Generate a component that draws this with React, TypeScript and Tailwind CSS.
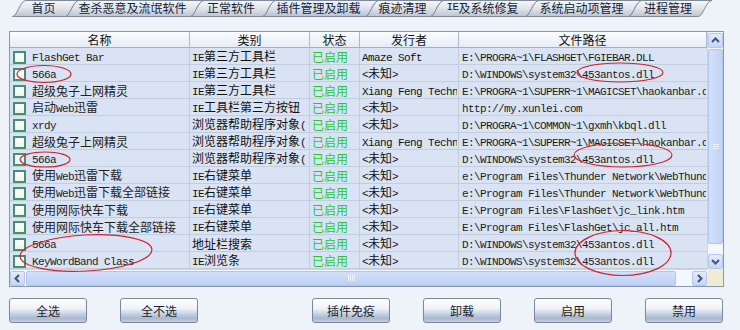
import React from "react";

const tabs = [
  { label: "首页", x: 12 },
  { label: "查杀恶意及流氓软件", x: 65 },
  { label: "正常软件", x: 190 },
  { label: "插件管理及卸载", x: 262, active: true },
  { label: "痕迹清理", x: 365 },
  { label: "IE及系统修复", x: 430 },
  { label: "系统启动项管理", x: 525 },
  { label: "进程管理", x: 628 },
];
const tabEnd = 698;

const rows = [
  ["FlashGet Bar", "IE第三方工具栏", "Amaze Soft", "E:\\PROGRA~1\\FLASHGET\\FGIEBAR.DLL"],
  ["566a", "IE第三方工具栏", "<未知>", "D:\\WINDOWS\\system32\\453antos.dll"],
  ["超级兔子上网精灵", "IE第三方工具栏", "Xiang Feng Technology", "E:\\PROGRA~1\\SUPERR~1\\MAGICSET\\haokanbar.dll"],
  ["启动Web迅雷", "IE工具栏第三方按钮", "<未知>", "http://my.xunlei.com"],
  ["xrdy", "浏览器帮助程序对象(BHO)", "<未知>", "D:\\PROGRA~1\\COMMON~1\\gxmh\\kbql.dll"],
  ["超级兔子上网精灵", "浏览器帮助程序对象(BHO)", "Xiang Feng Technology", "E:\\PROGRA~1\\SUPERR~1\\MAGICSET\\haokanbar.dll"],
  ["566a", "浏览器帮助程序对象(BHO)", "<未知>", "D:\\WINDOWS\\system32\\453antos.dll"],
  ["使用Web迅雷下载", "IE右键菜单", "<未知>", "e:\\Program Files\\Thunder Network\\WebThunder\\Program\\geturl.htm"],
  ["使用Web迅雷下载全部链接", "IE右键菜单", "<未知>", "e:\\Program Files\\Thunder Network\\WebThunder\\Program\\getAllurl.htm"],
  ["使用网际快车下载", "IE右键菜单", "<未知>", "E:\\Program Files\\FlashGet\\jc_link.htm"],
  ["使用网际快车下载全部链接", "IE右键菜单", "<未知>", "E:\\Program Files\\FlashGet\\jc_all.htm"],
  ["566a", "地址栏搜索", "<未知>", "D:\\WINDOWS\\system32\\453antos.dll"],
  ["KeyWordBand Class", "IE浏览条", "<未知>", "D:\\WINDOWS\\system32\\453antos.dll"],
];

const buttons = ["全选", "全不选", "插件免疫", "卸载", "启用", "禁用"];

// ascii runs get a narrow mono face so they sit at half the CJK width, like SimSun
const Txt = ({ s }: { s: string }) => (
  <>
    {s
      .split(/([\x20-\x7e]+)/)
      .filter(Boolean)
      .map((p, i) =>
        /^[\x20-\x7e]+$/.test(p) ? (
          <span key={i} className="font-['Liberation_Mono',monospace] text-[11px] tracking-[-0.6px]">
            {p}
          </span>
        ) : (
          <span key={i}>{p}</span>
        )
      )}
  </>
);

const TabShape = ({ w, active }: { w: number; active?: boolean }) => (
  <svg className="absolute left-0 top-0" width={w + 16} height={17} viewBox={`0 0 ${w + 16} 17`}>
    <defs>
      <linearGradient id={active ? "tga" : "tg"} x1="0" y1="0" x2="0" y2="1">
        <stop offset="0" stopColor={active ? "#f1f5fb" : "#f6f7f9"} />
        <stop offset="0.5" stopColor={active ? "#dbe3ef" : "#e0e4ea"} />
        <stop offset="1" stopColor={active ? "#b4c1d4" : "#bcc4cf"} />
      </linearGradient>
    </defs>
    <path
      d={`M0.5,16.5 C5,16.5 8,0.5 14,0.5 L${w + 14},0.5 C${w + 8},0.5 ${w + 5},16.5 ${w + 0.5},16.5 Z`}
      fill={`url(#${active ? "tga" : "tg"})`}
      stroke="#7f8a99"
      strokeWidth="1"
    />
  </svg>
);

const Chevron = ({ dir }: { dir: "up" | "down" | "left" | "right" }) => {
  const d = {
    up: "M3,8 L6.5,4.5 L10,8",
    down: "M3,5 L6.5,8.5 L10,5",
    left: "M8,3 L4.5,6.5 L8,10",
    right: "M5,3 L8.5,6.5 L5,10",
  }[dir];
  return (
    <svg width="13" height="13" viewBox="0 0 13 13">
      <path d={d} fill="none" stroke="#3d5584" strokeWidth="2" />
    </svg>
  );
};

const ScrollBtn = ({ dir }: { dir: "up" | "down" | "left" | "right" }) => (
  <div className="flex h-[15px] w-[15px] items-center justify-center rounded-[2px] border border-[#b7c7e8] bg-[linear-gradient(#e3ebfb,#c7d6f5)]">
    <Chevron dir={dir} />
  </div>
);

const Ellipses = () => (
  <svg className="pointer-events-none absolute left-0 top-0" width="740" height="330" viewBox="0 0 740 330">
    <g fill="none" stroke="#d21f2f" strokeWidth="1.2">
      <ellipse cx="44" cy="74" rx="27" ry="8.5" />
      <ellipse cx="620" cy="72.5" rx="43" ry="9.5" />
      <ellipse cx="45" cy="159.5" rx="25" ry="7.5" />
      <ellipse cx="623" cy="155" rx="49" ry="12" />
      <ellipse cx="86" cy="253" rx="66" ry="18" transform="rotate(-3 86 253)" />
      <ellipse cx="623" cy="253" rx="48" ry="22.5" />
    </g>
  </svg>
);

const cols = "grid grid-cols-[180px_120px_50px_99px_248px]";
const clip = "overflow-hidden whitespace-nowrap leading-[16px]";

const App = () => {
  return (
    <div className="relative h-[330px] w-[740px] overflow-hidden bg-[#eef3fa] font-['Noto_Sans_CJK_SC','Noto_Sans',sans-serif] text-[12px] leading-none text-[#111]">
      {/* tab strip */}
      <div className="flex h-[17px] pl-[12px]">
        {tabs.map((t, i) => {
          const w = (i < tabs.length - 1 ? tabs[i + 1].x : tabEnd) - t.x;
          return (
            <div key={t.label} className="relative h-[17px] shrink-0" style={{ width: w }}>
              <TabShape w={w} active={t.active} />
              <div className="relative flex h-[15px] items-center justify-center pl-[10px] text-[#14233a]">
                <Txt s={t.label} />
              </div>
            </div>
          );
        })}
      </div>

      {/* list */}
      <div className="ml-[9px] mt-[14px] grid h-[256px] w-[715px] grid-cols-[697px_16px] grid-rows-[237px_17px] border border-[#8698b4] bg-[#f3f6fc]">
        <div className="overflow-hidden bg-[#dae3f3]">
          <div className={`${cols} h-[16px] border-b border-[#9fb0ca] bg-[linear-gradient(#fbfcfe,#e6ecf6)]`}>
            {["名称", "类别", "状态", "发行者", "文件路径"].map((h) => (
              <div key={h} className="flex items-center justify-center border-r border-[#a9b8cf]">
                {h}
              </div>
            ))}
          </div>
          {rows.map((r, i) => (
            <div key={i} className={`${cols} h-[17px] border-b border-[#c2cde0]`}>
              <div className="flex items-center gap-[6px] border-r border-[#c2cde0] pl-[3px]">
                <span className="h-[13px] w-[13px] shrink-0 border-2 border-[#47906f] bg-[linear-gradient(#ffffff,#eef2f0)]" />
                <div className={`w-[155px] text-[#222] ${clip}`}>
                  <Txt s={r[0]} />
                </div>
              </div>
              <div className="flex items-center border-r border-[#c2cde0] pl-[2px]">
                <div className={`w-[114px] ${clip}`}>
                  <Txt s={r[1]} />
                </div>
              </div>
              <div className={`flex items-center border-r border-[#c2cde0] pl-[2px] text-[#2ec52e] ${clip}`}>
                已启用
              </div>
              <div className="flex items-center border-r border-[#c2cde0] pl-[2px]">
                <div className={`w-[95px] ${clip}`}>
                  <Txt s={r[2]} />
                </div>
              </div>
              <div className="flex items-center pl-[3px] text-[#1b1b1b]">
                <div className={`w-[244px] ${clip}`}>
                  <Txt s={r[3]} />
                </div>
              </div>
            </div>
          ))}
        </div>

        {/* vertical scrollbar */}
        <div className="flex flex-col items-center border-l border-[#c9d4e6] bg-[#f4f7fd] pt-[1px]">
          <ScrollBtn dir="up" />
          <div className="mt-[1px] flex h-[195px] w-[15px] items-center justify-center rounded-[2px] border border-[#b2c5ec] bg-[linear-gradient(90deg,#d3e0fa,#c2d3f6)]">
            <div className="flex flex-col gap-[1px]">
              <span className="h-px w-[6px] bg-[#eef3fd]" />
              <span className="h-px w-[6px] bg-[#eef3fd]" />
              <span className="h-px w-[6px] bg-[#eef3fd]" />
            </div>
          </div>
          <div className="flex-1" />
          <ScrollBtn dir="down" />
        </div>

        {/* horizontal scrollbar */}
        <div className="flex items-center border-t border-[#c9d4e6] bg-[#f4f7fd]">
          <ScrollBtn dir="left" />
          <div className="ml-[1px] flex h-[15px] w-[650px] items-center justify-center rounded-[2px] border border-[#b2c5ec] bg-[linear-gradient(#d3e0fa,#bed0f5)]">
            <div className="flex gap-[1px]">
              <span className="h-[6px] w-px bg-[#eef3fd]" />
              <span className="h-[6px] w-px bg-[#eef3fd]" />
              <span className="h-[6px] w-px bg-[#eef3fd]" />
              <span className="h-[6px] w-px bg-[#eef3fd]" />
            </div>
          </div>
          <div className="flex-1" />
          <ScrollBtn dir="right" />
        </div>
        <div className="bg-[#efebd7]" />
      </div>

      {/* buttons */}
      <div className="ml-[9px] mt-[11px] flex gap-[33px]">
        {buttons.map((b, i) => (
          <button
            key={b}
            className={`h-[25px] w-[78px] rounded-[3px] border border-[#7b889c] bg-[linear-gradient(#ffffff_0%,#eef2f8_42%,#c5d0e1_66%,#a9b8cf_84%,#c6d0df_100%)] text-[12px] text-[#1a1f2a] ${
              i === 2 ? "ml-[81px]" : ""
            }`}
          >
            {b}
          </button>
        ))}
      </div>

      <Ellipses />
    </div>
  );
};

export default App;
